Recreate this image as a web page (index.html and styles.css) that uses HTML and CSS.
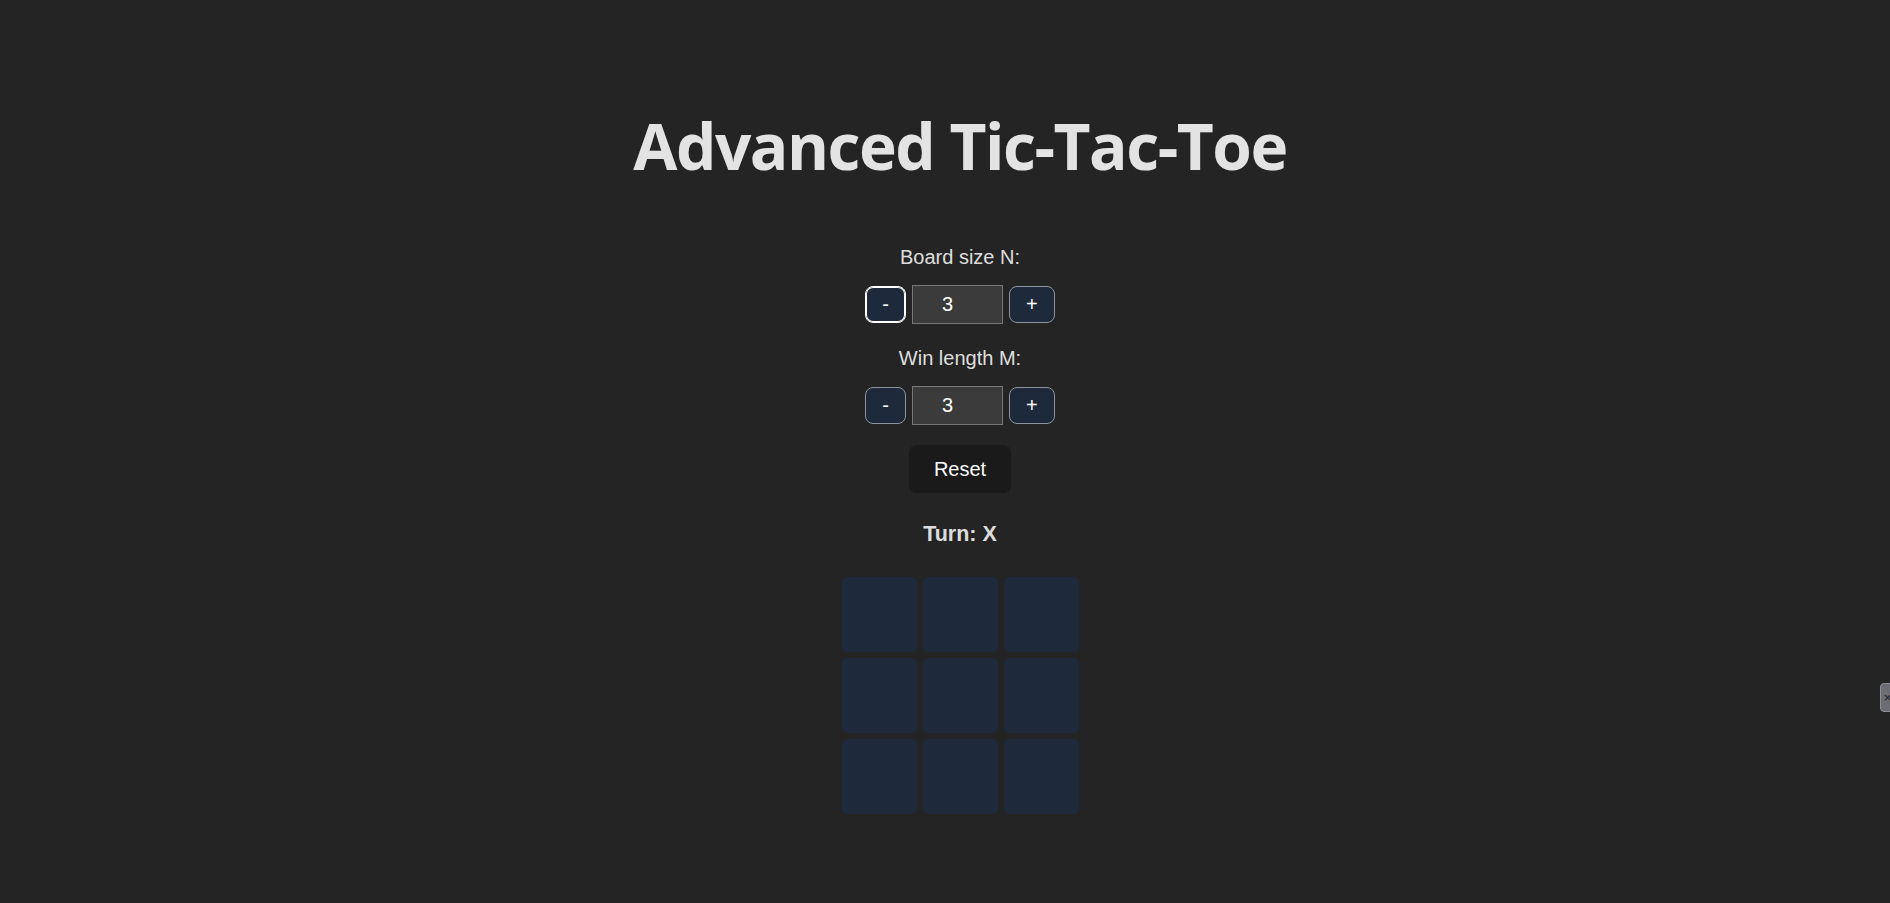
FILE: index.html
```html
<!DOCTYPE html>
<html lang="en">
<head>
<meta charset="utf-8">
<title>Advanced Tic-Tac-Toe</title>
<link rel="stylesheet" href="styles.css">
</head>
<body>
<main class="app">
  <h1 class="title">Advanced Tic-Tac-Toe</h1>
  <div class="field">
    <div class="field-label">Board size N:</div>
    <div class="stepper">
      <button class="step-btn step-btn--focus">-</button>
      <input class="step-input" type="text" value="3">
      <button class="step-btn">+</button>
    </div>
  </div>
  <div class="field">
    <div class="field-label">Win length M:</div>
    <div class="stepper">
      <button class="step-btn">-</button>
      <input class="step-input" type="text" value="3">
      <button class="step-btn">+</button>
    </div>
  </div>
  <button class="reset-btn">Reset</button>
  <div class="turn">Turn: X</div>
  <div class="board">
    <div class="cell"></div><div class="cell"></div><div class="cell"></div>
    <div class="cell"></div><div class="cell"></div><div class="cell"></div>
    <div class="cell"></div><div class="cell"></div><div class="cell"></div>
  </div>
</main>
<div class="edge-tab">×</div>
</body>
</html>
```
FILE: styles.css
```css
html, body {
  margin: 0;
  padding: 0;
}
body {
  background: #242424;
  color: rgba(255, 255, 255, 0.87);
  font-family: "Liberation Sans", Arial, sans-serif;
  font-size: 20px;
  line-height: 23px;
  min-height: 100vh;
  overflow: hidden;
}
.app {
  display: flex;
  flex-direction: column;
  align-items: center;
  padding: 106px 0 0 30px;
  box-sizing: border-box;
  width: 100%;
}
.title {
  margin: 0 0 60px;
  font-family: "Open Sans", "Noto Sans", sans-serif;
  font-weight: 700;
  font-size: 64px;
  line-height: 80px;
  color: #e3e3e3;
  letter-spacing: -1.5px;
}
.field {
  display: flex;
  flex-direction: column;
  align-items: center;
  margin-bottom: 23px;
}
.field + .field {
  margin-bottom: 20px;
}
.field-label {
  margin-bottom: 16px;
}
.stepper {
  display: flex;
  align-items: center;
  gap: 6px;
}
.step-btn {
  font-family: "Liberation Sans", Arial, sans-serif;
  font-size: 20px;
  line-height: 23px;
  padding: 6px 16px;
  border: 1px solid #8e949c;
  border-radius: 8px;
  background: #1e293b;
  color: #ffffff;
  cursor: pointer;
}
.step-btn--focus {
  border-color: #ffffff;
  box-shadow: inset 0 0 0 1px #ffffff;
}
.step-input {
  width: 91px;
  height: 39px;
  box-sizing: border-box;
  border: 1px solid #787878;
  background: #3b3b3b;
  color: #ffffff;
  font-family: "Liberation Sans", Arial, sans-serif;
  font-size: 20px;
  text-align: center;
  padding: 0 20px 0 0;
  outline: none;
}
.reset-btn {
  font-family: "Liberation Sans", Arial, sans-serif;
  font-size: 20px;
  line-height: 22px;
  padding: 12px 24px;
  border: 1px solid transparent;
  border-radius: 8px;
  background: #1a1a1a;
  color: #ffffff;
  cursor: pointer;
  margin-bottom: 29px;
}
.turn {
  font-weight: 700;
  font-size: 21.5px;
  line-height: 25px;
  margin-bottom: 30px;
}
.board {
  display: grid;
  grid-template-columns: repeat(3, 75px);
  grid-auto-rows: 75px;
  gap: 6px;
}
.cell {
  background: #1e293b;
  border-radius: 5px;
}
.edge-tab {
  position: fixed;
  right: -4px;
  top: 683px;
  width: 14px;
  height: 29px;
  box-sizing: border-box;
  background: #6c6c74;
  border: 1px solid #8e8e96;
  border-radius: 4px 0 0 4px;
  color: #1e1e22;
  font-family: "DejaVu Sans", sans-serif;
  font-size: 11px;
  line-height: 27px;
  padding-left: 2px;
  overflow: hidden;
}
```
